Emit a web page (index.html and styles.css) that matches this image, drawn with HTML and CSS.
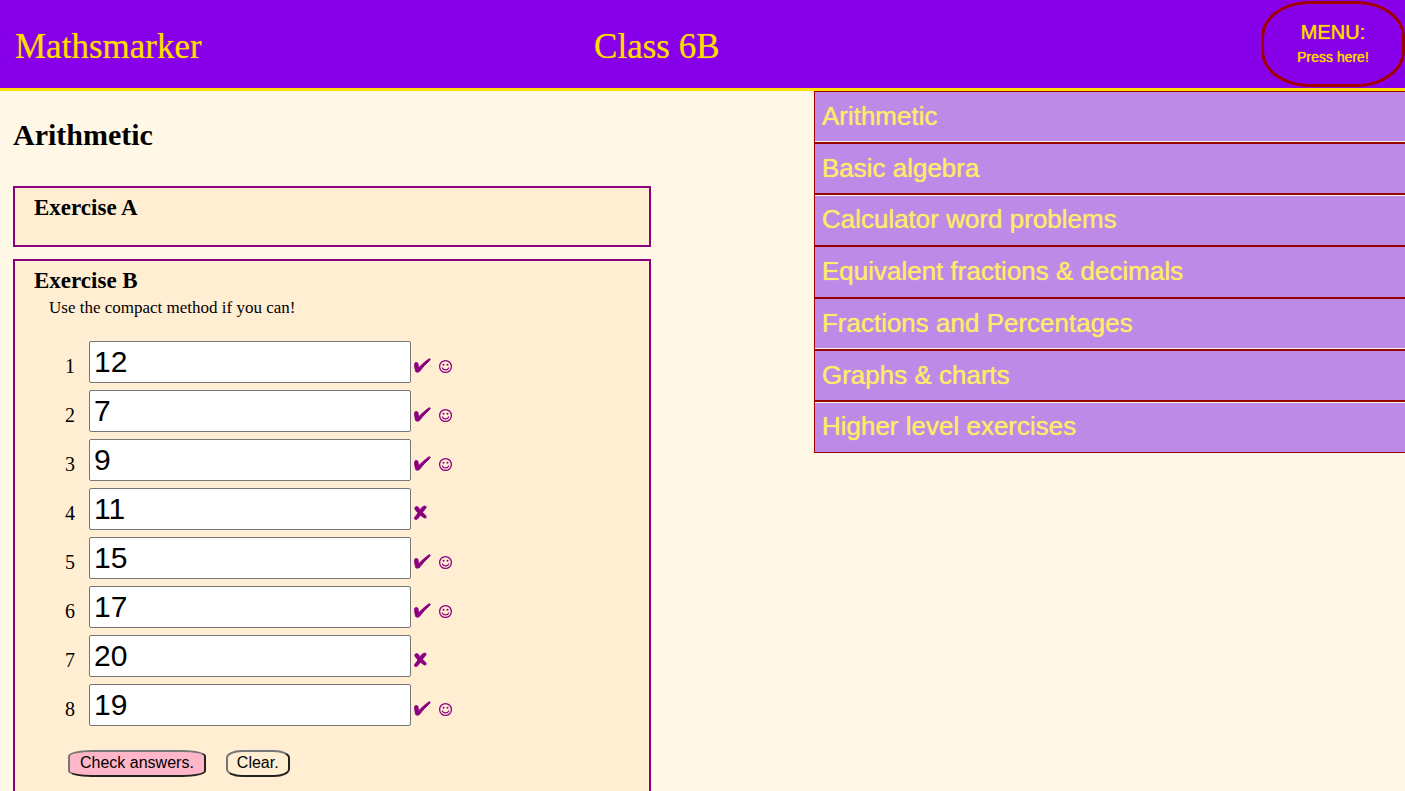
FILE: index.html
```html
<!DOCTYPE html>
<html lang="en">
<head>
<meta charset="utf-8">
<title>Mathsmarker</title>
<link rel="stylesheet" href="styles.css">
</head>
<body>
<svg class="symbols" width="0" height="0" aria-hidden="true">
  <symbol id="right" viewBox="0 0 40 16">
    <path fill="currentColor" stroke="currentColor" stroke-width="1" stroke-linejoin="round" d="M.6 6.400C.6 5 1.300 4.500 2.400 4.500c1.200 0 1.600.7 1.700 1.900l.2 2.200c.1.700.600.900 1.100.4C8.400 6 11.500 3.300 14.700 1.100c.7-.4 1.400-.3 1.500.2.1.5-.1.800-.6 1.200C12 5.800 8.700 9 5.900 12.900c-.6.9-1.200 1.200-2.700 1.200-1.300 0-1.600-.4-1.800-1.600C1 10.500.6 8.300.6 6.400z"/>
    <circle cx="31.500" cy="8.500" r="5.900" fill="none" stroke="currentColor" stroke-width="1.300"/>
    <path fill="none" stroke="currentColor" stroke-width="1.200" stroke-linecap="round" d="M28.300 10c1.200 2.500 5.200 2.500 6.400 0"/>
    <circle cx="29.500" cy="6.700" r="1" fill="currentColor"/>
    <circle cx="33.500" cy="6.700" r="1" fill="currentColor"/>
  </symbol>
  <symbol id="wrong" viewBox="0 0 40 16">
    <path fill="currentColor" stroke="currentColor" stroke-width=".8" stroke-linejoin="round" d="M.8 3.300c0-1 .8-1.700 1.900-1.700 1.300 0 2 .8 3.200 3.300C7.600 2.300 9.300 1 10.900 1c1.200 0 1.700 1.300.9 2.200L8.500 7.300l2.700 2.700c.9 1 1.200 1.500 1 2.200-.3 1-1.600 1.200-2.600.3L6.300 10.200 4.200 13.200c-1 1.300-2 1.700-2.900 1.300-1.100-.5-1.200-1.500-.3-2.600L4 8 1.600 5.200c-.6-.8-.8-1.300-.8-1.900z"/>
  </symbol>
</svg>
<header class="banner">
  <div class="brand">Mathsmarker</div>
  <div class="group">Class 6B</div>
  <button type="button" class="menu-button">MENU:<small class="hint">Press here!</small></button>
  <nav class="menu">
    <ul class="menu-list">
      <li class="menu-item"><a href="#arithmetic">Arithmetic</a></li>
      <li class="menu-item"><a href="#algebra">Basic algebra</a></li>
      <li class="menu-item"><a href="#calculator">Calculator word problems</a></li>
      <li class="menu-item"><a href="#equivalent">Equivalent fractions &amp; decimals</a></li>
      <li class="menu-item"><a href="#percentages">Fractions and Percentages</a></li>
      <li class="menu-item"><a href="#graphs">Graphs &amp; charts</a></li>
      <li class="menu-item"><a href="#higher">Higher level exercises</a></li>
    </ul>
  </nav>
</header>
<main class="page">
  <h1 class="title" id="arithmetic">Arithmetic</h1>
  <section class="exercise">
    <h2 class="heading">Exercise A</h2>
  </section>
  <section class="exercise">
    <h2 class="heading">Exercise B</h2>
    <p class="instruction">Use the compact method if you can!</p>
    <form class="answers">
      <div class="row"><label for="q1">1</label><input type="text" id="q1" value="12"><svg class="mark" role="img" aria-label="Right"><use href="#right"/></svg></div>
      <div class="row"><label for="q2">2</label><input type="text" id="q2" value="7"><svg class="mark" role="img" aria-label="Right"><use href="#right"/></svg></div>
      <div class="row"><label for="q3">3</label><input type="text" id="q3" value="9"><svg class="mark" role="img" aria-label="Right"><use href="#right"/></svg></div>
      <div class="row"><label for="q4">4</label><input type="text" id="q4" value="11"><svg class="mark" role="img" aria-label="Wrong"><use href="#wrong"/></svg></div>
      <div class="row"><label for="q5">5</label><input type="text" id="q5" value="15"><svg class="mark" role="img" aria-label="Right"><use href="#right"/></svg></div>
      <div class="row"><label for="q6">6</label><input type="text" id="q6" value="17"><svg class="mark" role="img" aria-label="Right"><use href="#right"/></svg></div>
      <div class="row"><label for="q7">7</label><input type="text" id="q7" value="20"><svg class="mark" role="img" aria-label="Wrong"><use href="#wrong"/></svg></div>
      <div class="row"><label for="q8">8</label><input type="text" id="q8" value="19"><svg class="mark" role="img" aria-label="Right"><use href="#right"/></svg></div>
      <div class="actions">
        <button type="button" class="action check">Check answers.</button>
        <button type="reset" class="action">Clear.</button>
      </div>
    </form>
  </section>
</main>
</body>
</html>
```
FILE: styles.css
```css
* { box-sizing: border-box; }

body {
  margin: 0;
  background: #fff8e7;
  color: #000;
  font-family: "Liberation Serif", serif;
  overflow: hidden;
}

.symbols { display: none; }

.banner {
  position: relative;
  display: grid;
  grid-template-columns: 42% 1fr auto;
  align-items: center;
  padding: 1px 0;
  background: #8800ea;
  border-bottom: 3px solid #ffdd00;
  color: #ffdd00;
  font-size: 35px;
  line-height: 40px;
  text-shadow: 0 0 1px #ffdd0099;
}

.brand { padding: 6px 0 0 15px; }
.group { padding: 6px 0 0 4px; }

.menu-button {
  display: flex;
  flex-direction: column;
  align-items: center;
  justify-content: center;
  width: 144px;
  height: 86px;
  padding: 0;
  background: transparent;
  border: 3px solid #a00000;
  border-radius: 48px / 36px;
  color: #ffdd00;
  font: 20px/26px "Liberation Sans", sans-serif;
  text-shadow: 0 0 1px #ffdd00;
}

.hint { font-size: 14px; line-height: 24px; }

/* Drops down over the page from the right end of the banner. */
.menu {
  position: absolute;
  top: calc(100% + 3px);
  right: 0;
  width: 42%;
}

.menu-list {
  display: grid;
  grid-auto-rows: 1fr;
  min-height: 362px;
  margin: 0 0 0 -1px;
  padding: 0;
  list-style: none;
}

.menu-item {
  display: grid;
  border: 1px solid #960000;
  border-right: 0;
}

.menu-item a {
  padding: 4px 7px;
  background: #bd8ae8;
  color: #ffeb6b;
  font: 26px/40px "Liberation Sans", sans-serif;
  text-decoration: none;
  text-shadow: 0 0 1px #ffeb6b;
}

/* Pale hairlines beside every other divider. */
.menu-item:nth-child(4n + 1) a { box-shadow: inset 0 -1px #fff8e7; }
.menu-item:nth-child(4n + 3) a { box-shadow: inset 0 1px #fff8e7; }

.page {
  width: 47%;
  padding: 24px 9px 0 13px;
}

.title {
  margin: 0 0 31px;
  font-size: 30px;
  line-height: 40px;
}

.exercise {
  margin-bottom: 12px;
  padding: 5px 19px 23px;
  background: #ffeed2;
  border: 2px solid #8b0080;
}

.heading {
  margin: 0;
  font-size: 23px;
  line-height: 30px;
}

.exercise:first-of-type { padding-bottom: 22px; }

.instruction {
  margin: 0 15px;
  font-size: 17px;
  line-height: 24px;
}

.answers {
  display: flex;
  flex-direction: column;
  gap: 7px;
  padding: 21px 0 0 31px;
}

.row {
  display: flex;
  align-items: center;
  font-size: 20px;
}

.row label { width: 24px; padding-top: 8px; }

.row input {
  width: 322px;
  height: 42px;
  padding: 1px 4px;
  background: #fff;
  border: 1px solid #767676;
  border-radius: 2px;
  font: 30px/36px "Liberation Sans", sans-serif;
}

.mark {
  width: 40px;
  height: 16px;
  margin: 8px 0 0 3px;
  color: #8b0080;
}

.actions {
  display: flex;
  gap: 20px;
  padding: 17px 0 0 3px;
}

.action {
  padding: 1px 9px 3px;
  background: transparent;
  border: 2px solid;
  border-color: #767676 #222 #222 #767676;
  border-radius: 16px / 8px;
  color: #000;
  font: 16px/19px "Liberation Sans", sans-serif;
}

.check {
  padding: 1px 10px 3px;
  background: #ffb6c8;
  border-radius: 24px / 6px;
}
```
